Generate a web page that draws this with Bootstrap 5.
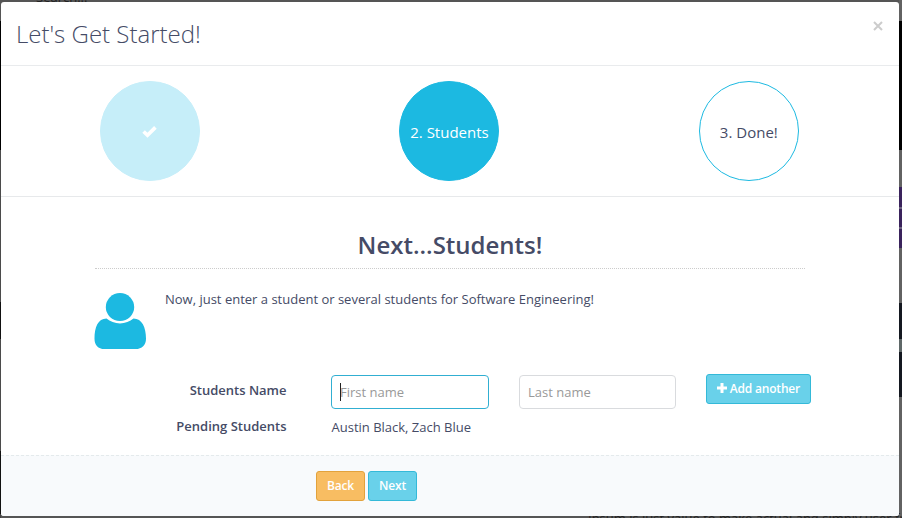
<!DOCTYPE html>
<html lang="en">
<head>
<meta charset="utf-8">
<meta name="viewport" content="width=device-width, initial-scale=1">
<title>Let's Get Started!</title>
<link href="https://cdn.jsdelivr.net/npm/bootstrap@5.3.0/dist/css/bootstrap.min.css" rel="stylesheet">
<style>
  html, body { height: 100%; overflow: hidden; }
  body {
    font-family: "Open Sans", sans-serif; font-size: 13px; line-height: 18px; color: #454b66;
    padding: 2px 3px 2px 1px;
    background:
      linear-gradient(#626262 21px, #000 21px 150px, #626262 150px 187px, #3a235c 187px 207px, #6d6480 207px 209px, #3a235c 209px 227px, #6d6480 227px 229px, #3a235c 229px 248px, #626262 248px 303px, #141820 303px 339px, #5f6868 339px 352px, #141820 352px 397px, #626262 397px) right top / 3px 100% no-repeat,
      linear-gradient(#555 21px, #000 21px 150px, #4b4b4b 150px 302px, #111 302px 339px, #4b4b4b 339px 451px, #111 451px 514px, #444 514px) left top / 1px 100% no-repeat,
      #555;
  }
  .page-peek { position: absolute; color: #222; white-space: nowrap; z-index: -1; }
  .peek-top { left: 36px; top: -12px; }
  .peek-bottom { left: 588px; top: 509px; }
  .modal-content { height: 514px; border: 0; border-radius: 3px; overflow: hidden; background: #fff; color: #454b66; }
  .modal-header { height: 64px; padding: 0 15px; border-bottom: 1px solid #e9ebed; }
  .modal-title { font-size: 24px; font-weight: 300; line-height: 32px; }
  .close-x { border: 0; background: none; padding: 0; width: 12px; height: 12px; line-height: 0; margin: 0 0 15px 0; }
  .steps { height: 131px; border-bottom: 1px solid #e7e9eb; padding: 15px 0; }
  .step { width: 100px; height: 100px; border: 1px solid #1cb9e1; font-size: 15px; padding-top: 1px; padding-right: 1px; }
  .step-past { background: #c6eef9; border-color: #c6eef9; margin-right: 2px; padding-right: 0; }
  .step-now { background: #1cb9e1; color: #fff; margin-right: 2px; padding-right: 0; padding-left: 1px; }
  .panel-body { height: 258px; padding: 31px 84px 0 93px; }
  .section-title { font-size: 24px; font-weight: 600; line-height: 34px; height: 41px; margin: 0 0 24px 1px; border-bottom: 1px dotted #ccc; width: 710px; }
  .person { width: 52px; height: 56px; }
  .intro { margin-left: 19px; margin-top: -3px; }
  .entry { margin-top: 26px; }
  .field-label { width: 192.500px; flex: none; font-weight: 600; text-align: right; }
  .name-label { padding-top: 6px; }
  .form-control { width: 158px; height: 34px; margin-left: 44.500px; padding: 6px 8px; font-size: 13px; border: 1px solid #d9dbde; border-radius: 4px; box-shadow: none; color: inherit; flex: none; }
  .form-control::placeholder { color: #999; opacity: 1; }
  .input-now { position: relative; flex: none; }
  .input-now .form-control { border-color: #31afd2; }
  .input-now::after { content: ""; position: absolute; left: 53.500px; top: 8px; width: 1px; height: 18px; background: #222; }
  .form-control.last { width: 157px; margin-left: 30px; }
  .btn { height: 30px; padding: 0 10px; font-size: 12px; line-height: 28px; border-radius: 3px; color: #fff; font-weight: 600; letter-spacing: -.2px; }
  .btn-sky, .btn-sky:hover { background: #69d1ea; border-color: #34b9d8; color: #fff; }
  .btn-sun, .btn-sun:hover { background: #f8bd62; border-color: #e2a23c; color: #fff; }
  .add-btn { width: 105px; margin: -1px 0 0 30px; flex: none; padding: 0; white-space: nowrap; }
  .add-btn svg { vertical-align: 0; }
  .pending { margin-top: 8px; }
  .pending-names { margin-left: 45px; margin-top: 1px; }
  .modal-footer { height: 61px; padding: 0 0 0 315px; justify-content: flex-start; background: #f8fafc; border-top: 1px dashed #e4eaec; }
  .modal-footer > * { margin: 0; }
  .modal-footer .btn { width: 49px; padding: 0; }
  .modal-footer .next-btn { margin-left: 3px; }
</style>
</head>
<body>
<div class="page-peek peek-top">Search...</div>
<div class="page-peek peek-bottom">Ipsum is just value to make actual and simply user friendly</div>
<main class="modal-content">
  <header class="modal-header d-flex justify-content-between align-items-center">
    <h1 class="modal-title">Let's Get Started!</h1>
    <button class="close-x" aria-label="Close"><svg width="10" height="10" viewBox="0 0 10 10"><path d="M1 1l8 8M9 1l-8 8" stroke="#ccc" stroke-width="2"/></svg></button>
  </header>
  <section class="steps row g-0">
    <div class="col-4 d-flex justify-content-center"><div class="step step-past rounded-circle d-flex align-items-center justify-content-center">
      <svg width="17" height="13" viewBox="0 0 14 11"><path d="M2 5.500l3.300 3.200L12 2" fill="none" stroke="#fff" stroke-width="3.100"/></svg></div></div>
    <div class="col-4 d-flex justify-content-center"><div class="step step-now rounded-circle d-flex align-items-center justify-content-center">2. Students</div></div>
    <div class="col-4 d-flex justify-content-center"><div class="step rounded-circle d-flex align-items-center justify-content-center">3. Done!</div></div>
  </section>
  <section class="panel-body">
    <h2 class="section-title text-center">Next...Students!</h2>
    <div class="d-flex">
      <svg class="person" viewBox="0 0 52 57" preserveAspectRatio="none"><g fill="#1cb9e1"><circle cx="26" cy="14.3" r="14.2"/><path d="M12.500 26C4 26 .5 35 .5 46.500C.5 53 4 57 10.500 57H41.500C48 57 52 53 52 46.500C52 35 48 26 39.500 26C36 29 31 31 26 31S16 29 12.500 26Z"/></g></svg>
      <p class="intro mb-0">Now, just enter a student or several students for Software Engineering!</p>
    </div>
    <div class="entry d-flex">
      <label class="field-label name-label" for="first">Students Name</label>
      <div class="input-now"><input id="first" class="form-control" placeholder="First name"></div>
      <input class="form-control last" placeholder="Last name" aria-label="Last name">
      <button class="btn btn-sky add-btn"><svg width="10" height="10" viewBox="0 0 10 10"><path d="M5 0v10M0 5h10" stroke="#fff" stroke-width="3"/></svg> Add another</button>
    </div>
    <div class="pending d-flex">
      <div class="field-label">Pending Students</div>
      <div class="pending-names">Austin Black, Zach Blue</div>
    </div>
  </section>
  <footer class="modal-footer d-flex align-items-center">
    <button class="btn btn-sun">Back</button>
    <button class="btn btn-sky next-btn">Next</button>
  </footer>
</main>
<script src="https://cdn.jsdelivr.net/npm/bootstrap@5.3.0/dist/js/bootstrap.bundle.min.js"></script>
</body>
</html>
